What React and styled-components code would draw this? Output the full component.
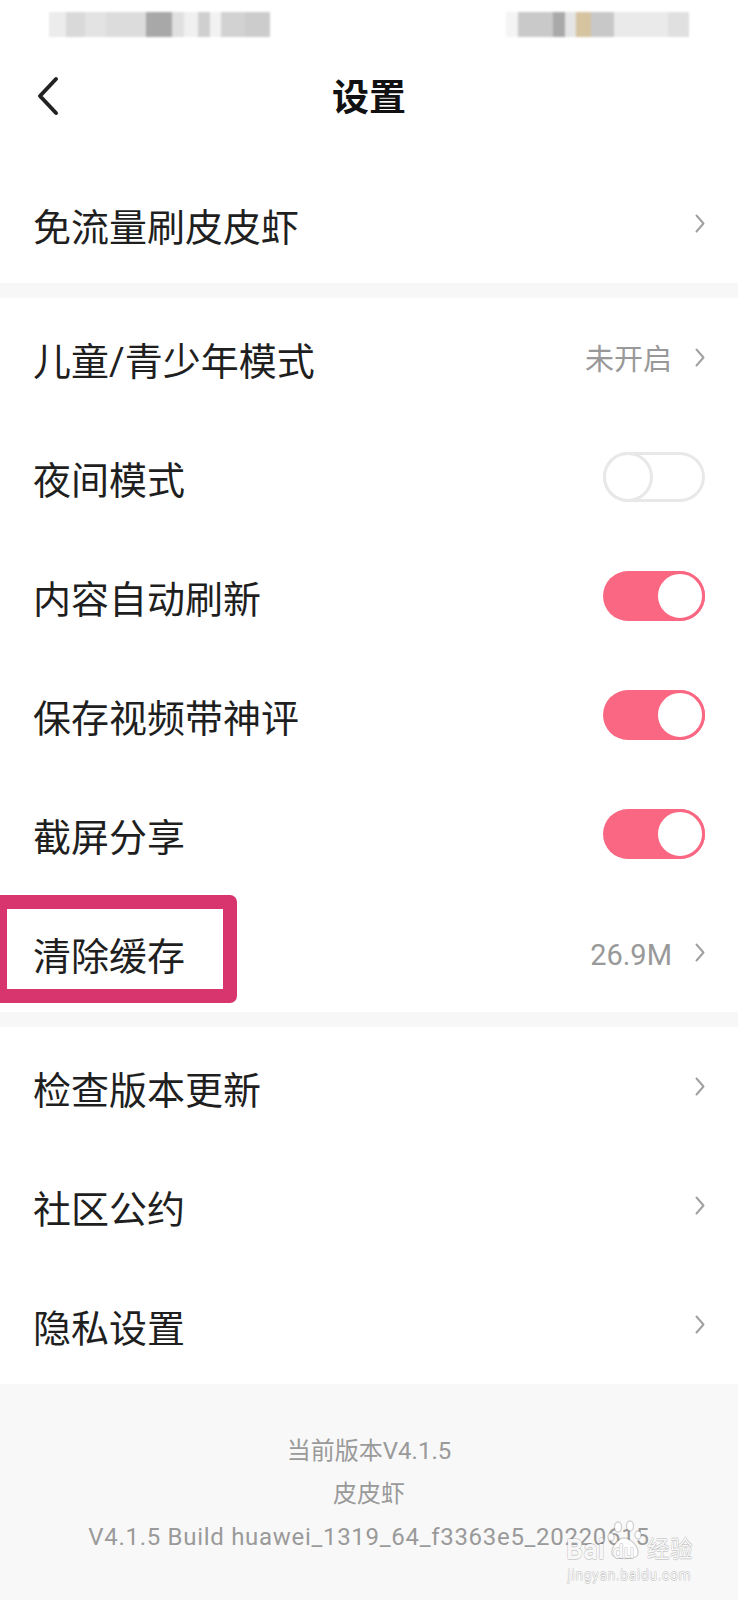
import React from "react";
import styled, { createGlobalStyle } from "styled-components";

const GlobalStyle = createGlobalStyle`
  html, body {
    margin: 0;
    padding: 0;
    background: #fff;
  }
  body {
    font-family: Roboto, "Noto Sans CJK SC", sans-serif;
    -webkit-font-smoothing: antialiased;
  }
`;

const PINK = "#fa6782";

const Page = styled.div`
  width: 738px;
  min-height: 1600px;
  display: flex;
  flex-direction: column;
  background: #fff;
  overflow: hidden;
`;

/* blurred status bar */
const StatusBar = styled.div`
  height: 60px;
  box-sizing: border-box;
  padding: 12px 49px 0 49px;
  display: flex;
  justify-content: space-between;
  align-items: flex-start;
`;

const Mosaic = styled.div`
  display: flex;
  height: 25px;
  filter: blur(1.2px);
`;

const Cell = styled.div`
  width: ${(p) => p.w}px;
  background: ${(p) => p.c};
`;

const NavBar = styled.div`
  height: 68px;
  display: grid;
  grid-template-columns: 1fr auto 1fr;
  align-items: center;
`;

const BackButton = styled.button`
  justify-self: start;
  display: flex;
  align-items: center;
  border: 0;
  background: none;
  padding: 4px 0 0 37px;
  cursor: pointer;
`;

const Title = styled.h1`
  margin: 8px 0 0 0;
  font-size: 37px;
  font-weight: 700;
  color: #111;
  line-height: 1;
`;

const Group = styled.section`
  padding-top: ${(p) => p.top || 0}px;
  background: #fff;
`;

const Divider = styled.div`
  height: 15px;
  background: #f7f7f7;
`;

const Row = styled.div`
  position: relative;
  height: 119px;
  box-sizing: border-box;
  padding: 0 33px;
  display: flex;
  align-items: center;
  justify-content: space-between;
`;

const Label = styled.span`
  margin-top: 9px;
  font-size: 38px;
  line-height: 1;
  color: #1f1f1f;
`;

const Trailing = styled.div`
  display: flex;
  align-items: center;
  gap: 23px;
`;

const Value = styled.span`
  margin-top: 6px;
  font-size: 29px;
  line-height: 1;
  color: #999;
`;

const Track = styled.div`
  width: 102px;
  height: 50px;
  box-sizing: border-box;
  border-radius: 25px;
  display: flex;
  align-items: center;
  justify-content: ${(p) => (p.on ? "flex-end" : "flex-start")};
  background: ${(p) => (p.on ? PINK : "#fff")};
  box-shadow: ${(p) => (p.on ? "none" : "inset 0 0 0 3px #e8e8e8")};
`;

const Knob = styled.div`
  width: 50px;
  height: 50px;
  box-sizing: border-box;
  border-radius: 50%;
  background: #fff;
  border: 3px solid ${(p) => (p.on ? PINK : "#e8e8e8")};
`;

const Highlight = styled.div`
  position: absolute;
  top: 2px;
  left: -7px;
  width: 244px;
  height: 108px;
  box-sizing: border-box;
  border: 14px solid #d8356f;
  border-radius: 7px;
  pointer-events: none;
`;

const Footer = styled.footer`
  position: relative;
  flex: 1;
  background: #f8f8f8;
  padding-top: 46px;
  text-align: center;
  color: #9a9a9a;
  font-size: 24px;
  line-height: 43px;
`;

const FooterLine = styled.div`
  letter-spacing: ${(p) => p.spacing || 0}px;
`;

const Watermark = styled.div`
  position: absolute;
  left: 566px;
  top: 136px;
  display: flex;
  flex-direction: column;
  align-items: center;
  color: rgba(255, 255, 255, 0.95);
  text-shadow: 0.6px 0 0 rgba(0, 0, 0, 0.16), -0.6px 0 0 rgba(0, 0, 0, 0.16),
    0 0.6px 0 rgba(0, 0, 0, 0.16), 0 -0.6px 0 rgba(0, 0, 0, 0.16);
  pointer-events: none;
`;

const MarkTop = styled.div`
  display: flex;
  align-items: flex-end;
  height: 42px;
  font-size: 27px;
  line-height: 24px;
  font-weight: 700;
`;

const Paw = styled.span`
  position: relative;
  display: inline-flex;
  justify-content: center;
  width: 36px;
  height: 42px;
  margin: 0 2px;
`;

const PawText = styled.span`
  position: absolute;
  bottom: 1px;
  left: 6px;
  font-size: 19px;
  line-height: 19px;
`;

const MarkCn = styled.span`
  font-size: 23px;
  line-height: 24px;
  font-weight: 400;
  margin-left: 2px;
`;

const MarkUrl = styled.div`
  margin-top: 4px;
  font-size: 14px;
  line-height: 18px;
  letter-spacing: 0.6px;
`;

const ChevronRight = () => (
  <svg width="10" height="19" viewBox="0 0 10 19">
    <path
      d="M1.5 1.5 L8.5 9.5 L1.5 17.5"
      fill="none"
      stroke="#a0a0a0"
      strokeWidth="2"
      strokeLinecap="round"
      strokeLinejoin="round"
    />
  </svg>
);

const BackIcon = () => (
  <svg width="22" height="40" viewBox="0 0 22 40">
    <path
      d="M19 3 L3 20 L19 37"
      fill="none"
      stroke="#222"
      strokeWidth="4"
      strokeLinecap="round"
      strokeLinejoin="round"
    />
  </svg>
);

const PawIcon = () => (
  <svg width="36" height="42" viewBox="0 0 36 42">
    <g fill="rgba(255,255,255,0.95)" stroke="rgba(0,0,0,0.16)" strokeWidth="1.4">
      <ellipse cx="11" cy="7" rx="3.5" ry="5" />
      <ellipse cx="23" cy="6" rx="3.5" ry="5" />
      <ellipse cx="31" cy="15" rx="3" ry="4" />
      <ellipse cx="4" cy="17" rx="3" ry="4" />
      <path d="M5 34 C4 26 12 18 17 18 C23 18 32 26 31 34 C30 40 7 40 5 34 Z" />
    </g>
  </svg>
);

const leftCells = [
  [17, "#ececec"],
  [19, "#d9d9d9"],
  [21, "#e3e3e3"],
  [40, "#dcdcdc"],
  [26, "#a8a8a8"],
  [12, "#e0e0e0"],
  [14, "#f0f0f0"],
  [12, "#cfcfcf"],
  [11, "#f2f2f2"],
  [24, "#d2d2d2"],
  [25, "#cccccc"],
];

const rightCells = [
  [12, "#f4f4f4"],
  [35, "#c9c9c9"],
  [12, "#a9a9a9"],
  [11, "#e5e5e5"],
  [15, "#d6c3a0"],
  [23, "#c8c8c8"],
  [54, "#eaeaea"],
  [21, "#e0e0e0"],
];

const Toggle = ({ on }) => (
  <Track on={on}>
    <Knob on={on} />
  </Track>
);

const SettingRow = ({ label, value, toggle, highlight }) => (
  <Row>
    <Label>{label}</Label>
    {toggle !== undefined ? (
      <Toggle on={toggle} />
    ) : (
      <Trailing>
        {value && <Value>{value}</Value>}
        <ChevronRight />
      </Trailing>
    )}
    {highlight && <Highlight />}
  </Row>
);

const App = () => {
  return (
    <Page>
      <GlobalStyle />
      <StatusBar>
        <Mosaic>
          {leftCells.map(([w, c], i) => (
            <Cell key={i} w={w} c={c} />
          ))}
        </Mosaic>
        <Mosaic>
          {rightCells.map(([w, c], i) => (
            <Cell key={i} w={w} c={c} />
          ))}
        </Mosaic>
      </StatusBar>

      <NavBar>
        <BackButton aria-label="返回">
          <BackIcon />
        </BackButton>
        <Title>设置</Title>
        <div />
      </NavBar>

      <Group top={36}>
        <SettingRow label="免流量刷皮皮虾" />
      </Group>
      <Divider />

      <Group>
        <SettingRow label="儿童/青少年模式" value="未开启" />
        <SettingRow label="夜间模式" toggle={false} />
        <SettingRow label="内容自动刷新" toggle={true} />
        <SettingRow label="保存视频带神评" toggle={true} />
        <SettingRow label="截屏分享" toggle={true} />
        <SettingRow label="清除缓存" value="26.9M" highlight />
      </Group>
      <Divider />

      <Group>
        <SettingRow label="检查版本更新" />
        <SettingRow label="社区公约" />
        <SettingRow label="隐私设置" />
      </Group>

      <Footer>
        <FooterLine>当前版本V4.1.5</FooterLine>
        <FooterLine>皮皮虾</FooterLine>
        <FooterLine spacing={0.7}>
          V4.1.5 Build huawei_1319_64_f3363e5_20220615
        </FooterLine>
        <Watermark>
          <MarkTop>
            Bai
            <Paw>
              <PawIcon />
              <PawText>du</PawText>
            </Paw>
            <MarkCn>经验</MarkCn>
          </MarkTop>
          <MarkUrl>jingyan.baidu.com</MarkUrl>
        </Watermark>
      </Footer>
    </Page>
  );
};

export default App;
